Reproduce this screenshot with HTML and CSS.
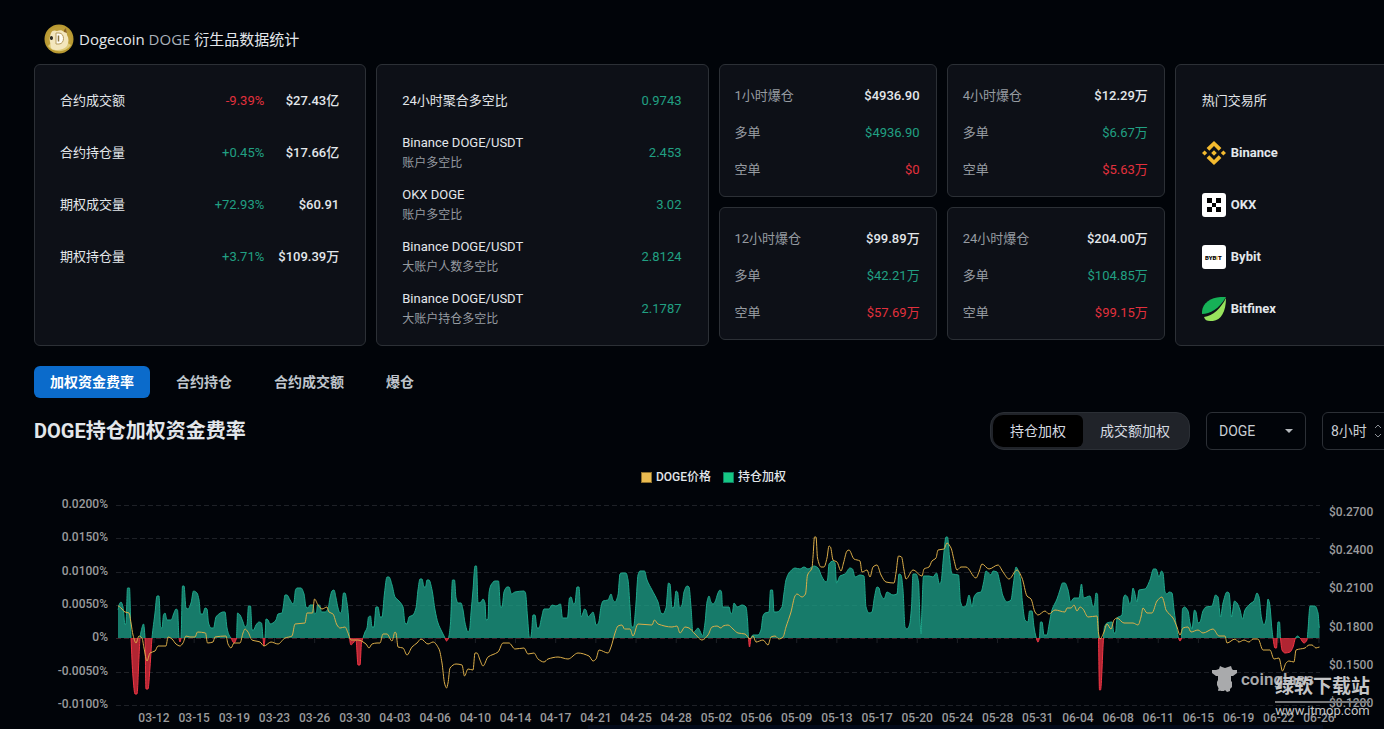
FILE: index.html
```html
<!DOCTYPE html>
<html lang="zh-CN">
<head>
  <meta charset="UTF-8">
  <title>Dogecoin DOGE 衍生品数据统计</title>
  <link rel="stylesheet" href="styles.css">
</head>
<body>

  <main class="page">
    <header class="page-header">
      <svg class="coin-logo" viewBox="0 0 30 30" aria-hidden="true">
        <circle cx="15" cy="15" r="14.5" fill="#b99a32"/>
        <circle cx="15" cy="15" r="12.5" fill="#bd9e3a"/>
        <path d="M4 22c4 6 17 8 23-1l-5-3-15 1z" fill="#dcc978"/>
        <path d="M7 9c1-3 4-3 6-2 3-1 5-1 7 1l2-3 1 6c2 3 2 7 0 11-3 4-11 5-15 3-2-2-1-4-2-7-1-3 0-6 1-9z" fill="#f3e6bd"/>
        <path d="M20 6l2-2 1 5-3-1z" fill="#8a6424"/>
        <path d="M6 13c1-2 3-1 3 1s-2 3-3 1z" fill="#2d2a22"/>
        <path d="M12 9v11h3c6 0 6-11 0-11z" fill="#fffdf5" stroke="#b59a5c"/>
        <path d="M14.500 11.500v6" fill="none" stroke="#8f7740" stroke-width="1.500"/>
      </svg>
      <h1>Dogecoin <span>DOGE</span> 衍生品数据统计</h1>
    </header>

    <section class="cards">
      <div class="card card-wide">
        <div class="row"><span>合约成交额</span><span class="change down">-9.39%</span><span class="value">$27.43亿</span></div>
        <div class="row"><span>合约持仓量</span><span class="change up">+0.45%</span><span class="value">$17.66亿</span></div>
        <div class="row"><span>期权成交量</span><span class="change up">+72.93%</span><span class="value">$60.91</span></div>
        <div class="row"><span>期权持仓量</span><span class="change up">+3.71%</span><span class="value">$109.39万</span></div>
      </div>

      <div class="card card-wide">
        <div class="row"><span>24小时聚合多空比</span><span class="up">0.9743</span></div>
        <div class="row"><div>Binance DOGE/USDT<small>账户多空比</small></div><span class="up">2.453</span></div>
        <div class="row"><div>OKX DOGE<small>账户多空比</small></div><span class="up">3.02</span></div>
        <div class="row"><div>Binance DOGE/USDT<small>大账户人数多空比</small></div><span class="up">2.8124</span></div>
        <div class="row"><div>Binance DOGE/USDT<small>大账户持仓多空比</small></div><span class="up">2.1787</span></div>
      </div>

      <div class="card-stack">
        <div class="card card-small">
          <div class="row"><span>1小时爆仓</span><b>$4936.90</b></div>
          <div class="row"><span>多单</span><span class="up">$4936.90</span></div>
          <div class="row"><span>空单</span><span class="down">$0</span></div>
        </div>
        <div class="card card-small">
          <div class="row"><span>12小时爆仓</span><b>$99.89万</b></div>
          <div class="row"><span>多单</span><span class="up">$42.21万</span></div>
          <div class="row"><span>空单</span><span class="down">$57.69万</span></div>
        </div>
      </div>

      <div class="card-stack">
        <div class="card card-small">
          <div class="row"><span>4小时爆仓</span><b>$12.29万</b></div>
          <div class="row"><span>多单</span><span class="up">$6.67万</span></div>
          <div class="row"><span>空单</span><span class="down">$5.63万</span></div>
        </div>
        <div class="card card-small">
          <div class="row"><span>24小时爆仓</span><b>$204.00万</b></div>
          <div class="row"><span>多单</span><span class="up">$104.85万</span></div>
          <div class="row"><span>空单</span><span class="down">$99.15万</span></div>
        </div>
      </div>

      <div class="card card-exchange">
        <div class="row"><span>热门交易所</span></div>
        <a class="row exchange" href="#">
          <svg viewBox="0 0 24 24" fill="#f3ba2f" aria-hidden="true">
            <path d="M7.3 9.8L12 5.1l4.7 4.7 2.7-2.7L12 0 4.6 7.1zM0 12l2.6-2.6L5.2 12l-2.6 2.6zM7.3 14.2L12 18.9l4.7-4.7 2.7 2.7L12 24l-7.4-7.1zM18.8 12l2.6-2.6L24 12l-2.6 2.6zM14.8 12L12 9.2 9.2 12l2.8 2.8z"/>
          </svg>Binance
        </a>
        <a class="row exchange" href="#">
          <svg viewBox="0 0 24 24" aria-hidden="true">
            <rect width="24" height="24" rx="3" fill="#fff"/>
            <path d="M5 5h5v5H5zM14 5h5v5h-5zM10 10h4v4h-4zM5 14h5v5H5zM14 14h5v5h-5z"/>
          </svg>OKX
        </a>
        <a class="row exchange" href="#">
          <svg viewBox="0 0 24 24" aria-hidden="true">
            <rect width="24" height="24" rx="3" fill="#fff"/>
            <text class="bybit-mark" x="3" y="15">BYB<tspan fill="#f7a600">I</tspan>T</text>
          </svg>Bybit
        </a>
        <a class="row exchange" href="#">
          <svg viewBox="0 0 24 24" aria-hidden="true">
            <path d="M24 0C11-1-1 5 0 17c8 0 17-5 24-17z" fill="#16b157"/>
            <path d="M24 1c0 15-6 24-16 23-3 0-5-1-6-4C11 19 19 11 24 1z" fill="#97e35d"/>
          </svg>Bitfinex
        </a>
      </div>
    </section>

    <nav class="tabs">
      <button class="tab active">加权资金费率</button>
      <button class="tab">合约持仓</button>
      <button class="tab">合约成交额</button>
      <button class="tab">爆仓</button>
    </nav>

    <section class="toolbar">
      <h2>DOGE持仓加权资金费率</h2>
      <div class="segmented">
        <button class="active">持仓加权</button>
        <button>成交额加权</button>
      </div>
      <div class="select select-coin">
        <select aria-label="币种"><option>DOGE</option></select>
        <svg viewBox="0 0 8 4" width="8" height="4" aria-hidden="true"><path d="M0 0h8L4 4z" fill="#b5b9bd"/></svg>
      </div>
      <div class="select select-time">
        <select aria-label="周期"><option>8小时</option></select>
        <svg viewBox="0 0 8 14" width="8" height="14" aria-hidden="true"><path d="M1 4l3-3 3 3M1 10l3 3 3-3" fill="none" stroke="#8b9096"/></svg>
      </div>
    </section>

    <section class="chart">
      <div class="legend">
        <span class="legend-item"><i class="swatch price"></i>DOGE价格</span>
        <span class="legend-item"><i class="swatch rate"></i>持仓加权</span>
      </div>
      <svg class="plot" id="plot" viewBox="34 490 1359 239" role="img" aria-label="DOGE持仓加权资金费率">
        <defs>
          <clipPath id="above"><rect x="116" y="500" width="1204" height="138"/></clipPath>
          <clipPath id="below"><rect x="116" y="638" width="1204" height="70"/></clipPath>
        </defs>
        <rect x="588" y="725" width="735" height="4" fill="#030a1a"/>
        <g id="axis"></g>
        <g id="series"></g>
        <g class="brand">
          <path d="M1219 669l1-3 2 1 3 1 3-1 3-1 1 3 1 1 4 0 0 3-4 3-2 0 0 5 1 1 0 5-2 2 0 2-3 1-2-2-1 1-3 0-2-1-1-3-1-2 0-3 1-2 0-4-2 0-4-3 0-3 4 0z"/>
          <circle cx="1219" cy="690" r="1"/>
          <text x="1241" y="685">coinglass</text>
        </g>
      </svg>
      <div class="site-mark">
        <strong>绿软下载站</strong>
        <span>www.itmop.com</span>
      </div>
    </section>
  </main>

  <script src="chart.js"></script>
</body>
</html>
```

FILE: styles.css
```css
:root {
  --bg: #010409;
  --card: #0d1017;
  --border: #2c3036;
  --text: #e3e7eb;
  --muted: #969ba1;
  --up: #21a083;
  --down: #e2303d;
  --blue: #0b6bcb;
}

* {
  box-sizing: border-box;
}

body {
  margin: 0;
  overflow-x: hidden;
  background: var(--bg);
  color: var(--text);
  font-family: Roboto, "Noto Sans CJK SC", sans-serif;
  font-size: 13px;
  line-height: 20px;
}

button,
select {
  font-family: inherit;
  color: inherit;
}

.page {
  min-width: 1427px;
  padding: 0 34px;
}

.page-header {
  display: flex;
  align-items: center;
  gap: 5px;
  padding: 24px 10px 10px;
}

.coin-logo {
  width: 30px;
  height: 30px;
}

h1 {
  margin: 0;
  font-family: "Open Sans", "Noto Sans CJK SC", sans-serif;
  font-size: 15px;
  font-weight: 400;
}

h1 span {
  color: #aab1ba;
}

/* cards */
.cards {
  display: grid;
  grid-template-columns: repeat(12, 1fr);
  gap: 10px;
}

.card {
  background: var(--card);
  border: 1px solid var(--border);
  border-radius: 6px;
}

.card-wide {
  grid-column: span 3;
  padding: 10px 26px 10px 25px;
}

.card-stack {
  grid-column: span 2;
  display: flex;
  flex-direction: column;
  gap: 10px;
}

.card-exchange {
  grid-column: span 2;
  padding: 10px 26px;
}

.card-small {
  padding: 12px 16px 8px 15px;
  color: var(--muted);
}

.row {
  display: flex;
  align-items: center;
  justify-content: space-between;
  height: 52px;
}

.card-small .row {
  height: 37px;
}

.card-small b {
  color: var(--text);
  font-weight: 500;
}

.row small {
  display: block;
  color: var(--muted);
  font-size: 12px;
}

.change {
  margin-left: auto;
}

.value {
  width: 75px;
  text-align: right;
  font-weight: 500;
}

.up {
  color: var(--up);
}

.down {
  color: var(--down);
}

.exchange {
  justify-content: flex-start;
  gap: 5px;
  color: var(--text);
  font-weight: 700;
  text-decoration: none;
}

.exchange svg {
  width: 24px;
  height: 24px;
}

.bybit-mark {
  font-family: Roboto, sans-serif;
  font-size: 6px;
  font-weight: 900;
}

/* tabs */
.tabs {
  display: flex;
  gap: 10px;
  margin-top: 20px;
}

.tab {
  height: 32px;
  padding: 0 16px 2px;
  border: none;
  border-radius: 6px;
  background: none;
  color: #bfc5cc;
  font-size: 14px;
  font-weight: 700;
  cursor: pointer;
}

.tab.active {
  background: var(--blue);
  color: #fff;
}

/* chart title and controls */
.toolbar {
  display: flex;
  align-items: center;
  gap: 16px;
  margin-top: 14px;
  font-size: 14px;
}

h2 {
  flex: 1;
  margin: 0;
  font-family: Roboto, "Noto Sans CJK SC", sans-serif;
  font-size: 20px;
  line-height: 24px;
  font-weight: 700;
}

.segmented {
  display: flex;
  height: 38px;
  padding: 2px;
  border: 1px solid #2b2f35;
  border-radius: 14px;
  background: #202329;
}

.segmented button {
  padding: 0 17px 2px;
  border: none;
  border-radius: 6px;
  background: none;
  color: #d5dae0;
  font-size: 14px;
  cursor: pointer;
}

.segmented .active {
  border-radius: 10px 6px 6px 10px;
  background: #000;
}

.select {
  position: relative;
  height: 38px;
}

.select select {
  width: 100%;
  height: 100%;
  border: 1px solid var(--border);
  border-radius: 6px;
  background: var(--bg);
  color: #c9ced4;
  font-size: 14px;
  appearance: none;
}

.select svg {
  position: absolute;
  top: 0;
  bottom: 0;
  margin: auto 0;
  pointer-events: none;
}

.select-coin {
  width: 100px;
}

.select-coin select {
  padding: 0 12px;
}

.select-coin svg {
  right: 13px;
}

.select-time {
  width: 71px;
}

.select-time select {
  padding: 0 8px;
}

.select-time svg {
  right: 11px;
}

/* chart */
.chart {
  position: relative;
  margin-top: 17px;
}

.legend {
  display: flex;
  justify-content: center;
  gap: 12px;
  height: 23px;
  font-size: 12px;
  font-weight: 500;
}

.legend-item {
  display: flex;
  align-items: center;
  gap: 4px;
  height: 20px;
}

.swatch {
  width: 11px;
  height: 11px;
}

.swatch.price {
  background: #eabb50;
  border: 1px solid #8d6f2c;
}

.swatch.rate {
  background: #16c784;
  border: 1px solid #0e7b60;
}

.plot {
  display: block;
  width: 100%;
}

.plot .label {
  fill: #9a9b9d;
  font-size: 12px;
  font-weight: 500;
}

.grid {
  stroke: #1e2127;
  stroke-dasharray: 5 3;
}

.grid.zero {
  stroke: #3a1d26;
}

.tick {
  stroke: #1e2127;
}

.rate-line,
.price-line {
  fill: none;
  stroke: #1fa78b;
}

.rate-line.negative {
  stroke: #f23645;
}

.price-line {
  stroke: #dcae49;
}

.rate-area {
  fill: #1d9d85;
  fill-opacity: .78;
}

.rate-area.negative {
  fill: #e2303d;
}

.brand {
  fill: #a9aaac;
  font-size: 17px;
  font-weight: 600;
}

.site-mark {
  position: absolute;
  right: 23px;
  bottom: 12px;
  color: #c4c5c7;
  text-align: center;
  line-height: 15px;
}

.site-mark strong {
  display: block;
  padding-bottom: 2px;
  border-bottom: 2px solid #77787a;
  font-size: 19px;
  line-height: 24px;
}

.site-mark span {
  display: block;
  height: 14px;
  font-size: 13px;
}
```

FILE: chart.js
```js
// x,y pairs of the weighted funding rate, zero is at y = 638
const rate = `118,610 119,605 121,602 123,607 125,625 126,623 127.5,588 129.5,588 131,637 133,677 135,694 137,694
139,657 140,638 141,632 143.5,624 145,638 146,689 148,689 150,667 152,638 155,613 157,596 159,596 160.5,627 162,628
163.5,615 165,613 167,620 171,620 174,613 176,609 177.5,610 179,638 180,642 181,638 182.5,586 184,586 186,608 188,609
191,603 193.5,591 197,593 199,600 200.5,614 203,614 205,608 207,609 208.5,623 211,628 213.5,628 216,617 219,614
223,612 225,612 227,628 229,635 231,638 234,643 236.5,638 237.5,613 240,615 243,622 245,627 247,625 248.5,606
250.5,606 252,630 253.5,630 256,625 259,622 261.5,623 263,638 264,646 265,638 266,619 268,620 270,624 273,623 276,620
278,614 282,613 283.5,605 285,595 287,595 290,600 293,604 294,602 295.5,590 297,588 301,588 304,594 306,607 308,608
310,605 313,605 314.5,614 316.5,612 317.5,605 319.5,605 321.5,612 325,612 328,609 330,598 332,591 334,590 336,598
338,608 340,613 341.5,612 343.5,593 345,593 347,603 348.5,617 349.5,638 351,645 353,643 356,640 358,665 360,665
361.5,643 363,638 365,632 367,628 368.5,617 370.5,616 372,627 374,627 376,607 378,607 380,617 382,617 384.5,593
387,577 389,577 392,585 395,597 399,601 403,607 405,623 407,624 409,617 413,615 416,608 418,590 420,579 422,579
424,587 425.5,587 427,580 429,580 432,590 435,610 438,623 442,632 445,638 446.5,641 448.5,638 450.5,623 452.5,580
454.5,580 456,598 458,603 461,603 463,610 465,623 468,632 469.5,630 471,613 473,590 475,566 476.5,566 478,603 481,602
483,599 485,603 486,620 488,619 489,593 491,585 495,581 498.5,581 500.5,607 502,607 504,592 507,587 509,587 511.5,594
515,592 524,591 525.5,593 527.5,617 529.5,638 530.5,638 531.5,633 533,615 535,615 537,628 539,628 541.5,618 544,609
549,609 552,605 556,606 560.5,604 562.5,618 567.5,618 569.5,598 571,597 573.5,604 575,603 577,587 579,587 581,617
583,613 584.5,609 586,610 588,617 591,614 593,612 594.5,617 596,625 598.5,623 601,607 603,601 608,600 611,594 613,600
615,602 618,595 620,574 622,573 626,573 628,580 630,607 631.5,627 633.5,627 636,603 638,575 640,571 644.5,571 647,580
652,590 658,602 661,613 663,614 666,608 668.5,583 670,584 672,608 674,607 676,591 677.5,592 679.5,608 682,605 684,592
687,586 689,587 691,607 693,633 696,630 698,628 700,631 702.5,636 705,623 707,602 709,596 711,602 713,604 715,602
718,593 720,590 721.5,592 722.5,607 729,607 731,614 732.5,612 734,603 737,607 742,605 746,607 747.5,620 748.5,638
749.5,647 751,638 753,635 758,635 761,630 763,616 765,613 769,612 770.5,590 772.5,590 774,612 777,612 782,607 784,593
786,580 789,573 795,568 800,569 804,567 808,569 814,566 818,568 822,577 826,582 827.5,580 829,564 833,561 835,563
836.5,583 840,576 845,574 850,568 852.5,569 855,577 860,575 864,576 866,607 869,613 872,612 874.5,597 877,587 879,588
880.5,594 884,599 887,592 893,595 897,594 899,574 901,575 903,590 905,627 907,629 909.5,625 911.5,607 913,574 916,574
918.5,582 920,620 921,634 922,607 923.5,576 929,576 933,577 936.5,573 939.5,584 941,582 943.5,557 946,537 947.5,537
949.5,557 952,574 958.5,575 960.5,602 963,607 966,606 969,595 972,607 974,597 977,593 981,592 983.5,583 986,571
991,575 993,571 997,572 1000,583 1003,596 1007,602 1011,600 1013.5,583 1016,567 1018,570 1020.5,580 1022.5,603
1025,620 1028,622 1029.5,611 1032,611 1034,627 1036,637 1038,642 1039.5,637 1040.5,622 1042,622 1044,635 1047,635
1049,625 1052,610 1057,599 1060,590 1062.5,583 1065,583 1068,590 1070.5,602 1074,598 1079,598 1081.5,584 1083.5,598
1090,596 1093,607 1094.5,605 1096,593 1097.5,594 1098.5,638 1099.5,690 1100.5,690 1103.5,638 1104.5,627 1107,623
1112,622 1114,633 1115.5,633 1117,618 1122,615 1123.5,598 1125,595 1127.5,597 1129.5,604 1131,602 1133,588 1134.5,592
1137,602 1139,590 1145,589 1150,580 1153.5,569 1156,569 1159,577 1161.5,571 1163,573 1165,592 1167,594 1169,592
1172,593 1174,610 1177,630 1178.5,638 1180,641 1181.5,638 1182.5,609 1184.5,607 1188,611 1190,623 1192,629 1194.5,610
1196,612 1198,623 1200,622 1203,611 1206,607 1212,606 1215.5,595 1218,597 1220.5,617 1223,603 1227,592 1229,593
1231.5,617 1234.5,601 1237,603 1240,610 1242.5,619 1245,610 1250,604 1254,601 1257,593 1259,597 1261.5,618 1264,625
1266,620 1268,599 1269.5,603 1272,630 1273,638 1275,648 1276.5,648 1278,622 1279.5,622 1280.5,638 1282,650 1285,653
1290,652 1293,647 1295.5,638 1297.5,636 1300,638 1304,643 1307,640 1308,630 1310,606 1315,606 1318,613 1319.5,628`;

// x,y pairs of the DOGE price
const price = `118,606 121,608 125,612 129,613 131,623 133,635 136,643 139,636 142,638 144,648 147,661 150,653 155,651
158,646 166,646 168,637 172,639 176,644 180,646 183,643 186,636 190,637 195,637 197.5,632 205.5,633 207.5,643 213,642
215,637 226,636 228,644 231,648 234,643 240,643 243,633 245,629 248,632 252,640 260,642 264,646 271,642 278,644
285,638 292,636 295,624 305,623 307,613 312.5,613 314.5,599 318,605 322,609 327,607 329,612 333,614 337,625 340,628
345,627 348,633 351,640 358,640 366,644 369,648 372,644 377,643 380,643 383,634 387,634 392,641 395,632 396,633
398,647 403,648 407,655 412,647 417,643 421,639 428,644 433,642 439,649 442,663 444.5,683 446.5,688 448,683 450,668
456,664 462,665 464.5,676 468,669 473,670 475,653 477,653 480,660 483,666 488,657 498,652 503,643 509,643 515,649
524,648 528,654 534,653 538,659 544,662 548,659 558,657 568,659 578,653 589,656 593,661 596,659 599,650 608,653
611,647 615,633 618,626 622,625 624.5,629 630,629 633,636 638,624 652,625 654.5,620 658,624 672,627 677,626 680,633
685,627 689,628 695,634 702,640 708,635 712,627 717,626 721,628 723,626 728,625 733,629 738,633 745,634 750,639
753,636 756,642 763,640 768,645 771,637 775,636 779,639 783,637 786,627 791,612 795,596 797,594 802,597 805.5,594
807.5,575 812,568 813,557 814.5,537 816,537 817.5,558 821,567 824,567 827,558 829,546 830.5,547 833,560 837,562
841,571 843.5,563 847,551 849,550 854,559 860,561 862,572 867,570 870,577 873,567 877,565 881,575 886,582 894,583
896,573 898.5,556 901.5,557 904,570 906,579 913,570 922,576 924,569 929,567 932,561 936,558 938,550 944,549 947,543
951,548 954,560 957,570 961,567 966,567 976,578 979,572 982,564 989,569 998,565 1003,572 1009,579 1017,570 1022,578
1027,596 1031,599 1035,612 1038,615 1045,611 1049,614 1055,610 1065,612 1067,608 1071,608 1074,605 1077,611 1080,607
1083,609 1088,617 1097,616 1098.5,633 1100,639 1104,632 1107,624 1111,629 1114,620 1117,618 1124,623 1133,623
1138,625 1141,617 1143,608 1147,613 1152,613 1157,601 1162,597 1164,602 1166,610 1173,618 1177,627 1180,635 1183,628
1188,627 1191,632 1198,630 1203,633 1213,629 1219,636 1225,636 1227,643 1235,639 1239,642 1244,640 1249,642 1253,639
1258,639 1263,650 1270,650 1274,659 1279,658 1282.5,671 1286,663 1289,661 1294,662 1296,650 1305,648 1309,645
1312,645 1316,648 1319.5,647`;

const dates = ['03-12', '03-15', '03-19', '03-23', '03-26', '03-30', '04-03', '04-06', '04-10', '04-14',
  '04-17', '04-21', '04-25', '04-28', '05-02', '05-06', '05-09', '05-13', '05-17', '05-20',
  '05-24', '05-28', '05-31', '06-04', '06-08', '06-11', '06-15', '06-19', '06-22', '06-26'];
const rateLabels = ['0.0200%', '0.0150%', '0.0100%', '0.0050%', '0%', '-0.0050%', '-0.0100%'];
const priceLabels = ['$0.2700', '$0.2400', '$0.2100', '$0.1800', '$0.1500', '$0.1200'];

// Smooth curve that never overshoots its points
function smoothPath(text) {
  const p = text.trim().split(/\s+/).map(pair => pair.split(',').map(Number));
  const slope = (a, b) => (b[1] - a[1]) / (b[0] - a[0]);
  const tangents = p.map((point, i) => {
    if (i === 0 || i === p.length - 1) return 0;
    const before = slope(p[i - 1], point);
    const after = slope(point, p[i + 1]);
    return before * after <= 0 ? 0 : 2 * before * after / (before + after);
  });
  let d = `M${p[0]}`;
  for (let i = 1; i < p.length; i++) {
    const step = (p[i][0] - p[i - 1][0]) / 3;
    d += `C${p[i - 1][0] + step},${p[i - 1][1] + tangents[i - 1] * step} ${p[i][0] - step},${p[i][1] - tangents[i] * step} ${p[i]}`;
  }
  return d;
}

let axis = '';
rateLabels.forEach((label, i) => {
  const y = Math.round(505 + i * 33.3);
  axis += `<line class="grid${label === '0%' ? ' zero' : ''}" x1="116" x2="1320" y1="${y + 0.5}" y2="${y + 0.5}"/>`;
  axis += `<text class="label" x="108" y="${y + 3}" text-anchor="end">${label}</text>`;
});
priceLabels.forEach((label, i) => {
  axis += `<text class="label" x="1329" y="${516 + i * 38.2}">${label}</text>`;
});
dates.forEach((label, i) => {
  const x = 154 + i * 40.17;
  axis += `<line class="tick" x1="${x}" x2="${x}" y1="638" y2="643"/>`;
  axis += `<text class="label" x="${x}" y="722" text-anchor="middle">${label}</text>`;
});
document.getElementById('axis').innerHTML = axis;

const line = smoothPath(rate);
const area = line + 'V638H118Z';
document.getElementById('series').innerHTML = `
  <g clip-path="url(#above)"><path class="rate-area" d="${area}"/><path class="rate-line" d="${line}"/></g>
  <g clip-path="url(#below)"><path class="rate-area negative" d="${area}"/><path class="rate-line negative" d="${line}"/></g>
  <path class="price-line" d="${smoothPath(price)}"/>`;
```
